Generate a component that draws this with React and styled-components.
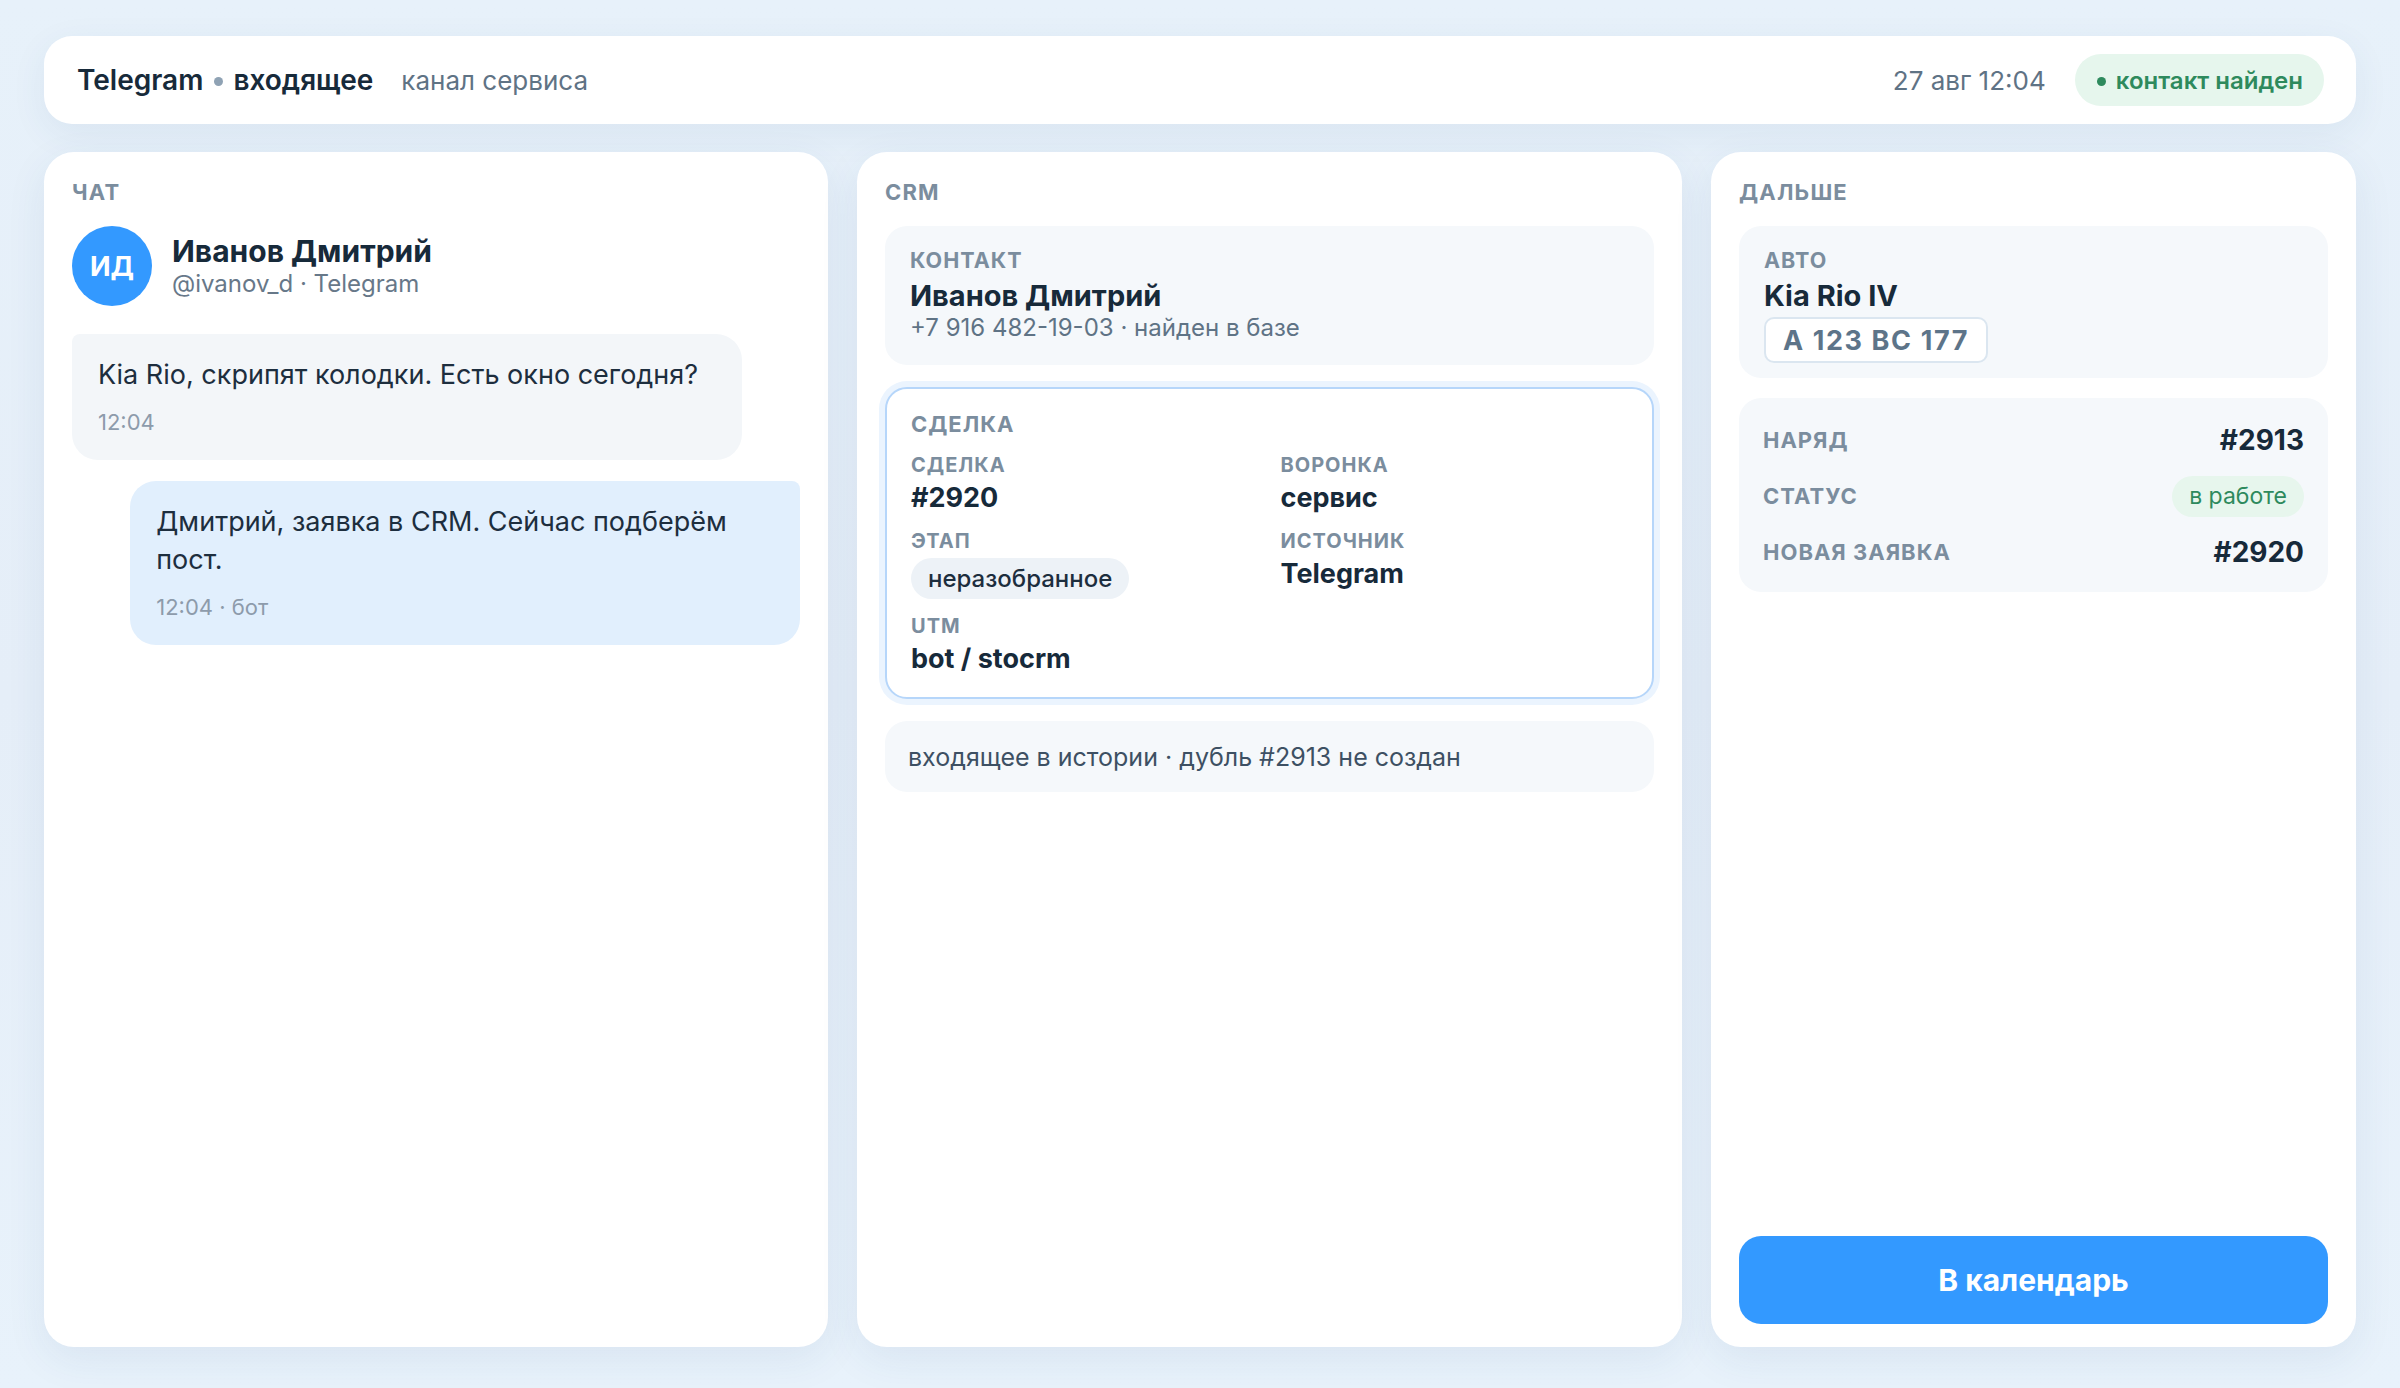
import React from "react";
import styled, { createGlobalStyle } from "styled-components";

const GlobalStyle = createGlobalStyle`
  * {
    box-sizing: border-box;
  }

  html,
  body {
    margin: 0;
    padding: 0;
    height: 100%;
  }

  body {
    font-family: Inter, "Noto Sans", "Liberation Sans", sans-serif;
    background: linear-gradient(180deg, #e7f1fa 0%, #e5eef8 50%, #e8f2fb 100%);
    color: #172a3a;
  }

  #root {
    height: 100%;
  }
`;

const Page = styled.div`
  height: 100vh;
  padding: 36px 44px 41px;
  display: flex;
  flex-direction: column;
  gap: 28px;
`;

const TopBar = styled.header`
  height: 88px;
  flex-shrink: 0;
  display: flex;
  align-items: center;
  padding: 0 32px 0 33px;
  background: #fff;
  border-radius: 28px;
  box-shadow: 0 10px 36px rgba(40, 80, 130, 0.07);
`;

const Title = styled.div`
  display: flex;
  align-items: center;
  font-size: 28px;
  font-weight: 600;
  color: #172a3a;
`;

const TitleDot = styled.span`
  width: 9px;
  height: 9px;
  border-radius: 50%;
  background: #8fa2b4;
  margin: 2px 10px 0 11px;
`;

const Subtitle = styled.div`
  margin-left: 28px;
  font-size: 26px;
  color: #5f7385;
`;

const Spacer = styled.div`
  flex: 1;
`;

const DateText = styled.div`
  font-size: 26px;
  color: #5f7385;
  margin-right: 29px;
`;

const StatusPill = styled.div`
  height: 52px;
  display: flex;
  align-items: center;
  padding: 0 21px 0 22px;
  border-radius: 26px;
  background: #e6f6ed;
  color: #2e8a5d;
  font-size: 24px;
  font-weight: 600;
`;

const PillDot = styled.span`
  width: 9px;
  height: 9px;
  border-radius: 50%;
  background: currentColor;
  margin: 2px 10px 0 0;
`;

const Columns = styled.main`
  flex: 1;
  min-height: 0;
  display: grid;
  grid-template-columns: 784fr 825fr 645fr;
  gap: 29px;
`;

const Panel = styled.section`
  background: #fff;
  border-radius: 30px;
  padding: 28px 28px 23px;
  display: flex;
  flex-direction: column;
  box-shadow: 0 12px 40px rgba(40, 80, 130, 0.08);
`;

const PanelLabel = styled.div`
  font-size: 22px;
  line-height: 24px;
  font-weight: 700;
  letter-spacing: 1.2px;
  text-transform: uppercase;
  color: #7b8d9e;
  margin-bottom: 22px;
`;

/* chat */

const ChatHead = styled.div`
  display: flex;
  align-items: center;
  gap: 20px;
  margin-bottom: 28px;
`;

const Avatar = styled.div`
  width: 80px;
  height: 80px;
  border-radius: 50%;
  background: #3399ff;
  color: #fff;
  font-size: 27px;
  font-weight: 700;
  display: flex;
  align-items: center;
  justify-content: center;
`;

const ChatName = styled.div`
  font-size: 30px;
  line-height: 36px;
  font-weight: 700;
  color: #172a3a;
`;

const ChatHandle = styled.div`
  font-size: 24px;
  line-height: 30px;
  color: #677889;
`;

const Messages = styled.div`
  display: flex;
  flex-direction: column;
  gap: 21px;
`;

const Bubble = styled.div`
  width: 92%;
  align-self: ${(p) => (p.$out ? "flex-end" : "flex-start")};
  background: ${(p) => (p.$out ? "#e1effd" : "#f3f6f9")};
  border-radius: ${(p) => (p.$out ? "26px 8px 26px 26px" : "8px 26px 26px 26px")};
  padding: 22px 26px 24px;
`;

const BubbleText = styled.div`
  font-size: 27px;
  line-height: 38px;
  color: #1d2e3e;
`;

const BubbleTime = styled.div`
  margin-top: 14px;
  font-size: 22px;
  line-height: 28px;
  color: #8d9bab;
`;

/* cards */

const Card = styled.div`
  background: #f5f8fb;
  border-radius: 22px;
  padding: ${(p) => p.$pad || "22px 25px 22px"};
`;

const CardLabel = styled.div`
  font-size: ${(p) => p.$size || 21.5}px;
  line-height: 24px;
  font-weight: 700;
  letter-spacing: 1px;
  text-transform: uppercase;
  color: #7b8d9e;
`;

const CardTitle = styled.div`
  margin-top: 7px;
  font-size: 29px;
  line-height: 34px;
  font-weight: 700;
  color: #172a3a;
`;

const CardMeta = styled.div`
  font-size: 24px;
  line-height: 30px;
  color: #5f7385;
`;

const Stack = styled.div`
  display: flex;
  flex-direction: column;
  gap: ${(p) => p.$gap || 22}px;
`;

const DealCard = styled.div`
  background: #fff;
  border: 2px solid #b6d6fa;
  border-radius: 22px;
  padding: 22px 24px 22px;
  box-shadow: 0 0 0 6px #ebf4fe;
`;

const DealHeader = styled.div`
  font-size: 22px;
  line-height: 26px;
  font-weight: 700;
  letter-spacing: 1px;
  text-transform: uppercase;
  color: #7b8d9e;
  margin-bottom: 16px;
`;

const FieldGrid = styled.div`
  display: grid;
  grid-template-columns: 1fr 1fr;
  column-gap: 22px;
  row-gap: 15px;
`;

const Field = styled.div`
  display: flex;
  flex-direction: column;
  align-items: flex-start;
  gap: 5px;
`;

const FieldValue = styled.div`
  font-size: 27px;
  line-height: 32px;
  font-weight: 700;
  color: #172a3a;
`;

const StagePill = styled.div`
  height: 41px;
  display: flex;
  align-items: center;
  padding: 0 17px;
  border-radius: 21px;
  background: #edf2f7;
  font-size: 24px;
  font-weight: 500;
  color: #1d2e3e;
`;

const NoteCard = styled(Card)`
  font-size: 25px;
  line-height: 30px;
  color: #3d5063;
`;

const Plate = styled.div`
  display: inline-flex;
  align-items: center;
  height: 46px;
  margin-top: 4px;
  padding: 0 17px;
  background: #fff;
  border: 2px solid #dbe6f0;
  border-radius: 10px;
  font-size: 27px;
  font-weight: 700;
  letter-spacing: 1.6px;
  color: #5d7489;
`;

const Rows = styled.div`
  display: flex;
  flex-direction: column;
  gap: 14px;
`;

const Row = styled.div`
  height: 42px;
  display: flex;
  align-items: center;
  justify-content: space-between;
`;

const RowValue = styled.div`
  font-size: 28px;
  font-weight: 700;
  color: #172a3a;
`;

const WorkPill = styled.div`
  height: 41px;
  display: flex;
  align-items: center;
  padding: 0 17px;
  border-radius: 21px;
  background: #e7f6ed;
  color: #2e8a5d;
  font-size: 23px;
`;

const CalendarButton = styled.button`
  margin-top: auto;
  height: 88px;
  width: 100%;
  border: none;
  border-radius: 22px;
  background: #3399ff;
  color: #fff;
  font-family: inherit;
  font-size: 30px;
  font-weight: 700;
  cursor: pointer;
`;

function ChatPanel() {
  return (
    <Panel>
      <PanelLabel>Чат</PanelLabel>
      <ChatHead>
        <Avatar>ИД</Avatar>
        <div>
          <ChatName>Иванов Дмитрий</ChatName>
          <ChatHandle>@ivanov_d · Telegram</ChatHandle>
        </div>
      </ChatHead>
      <Messages>
        <Bubble>
          <BubbleText>Kia Rio, скрипят колодки. Есть окно сегодня?</BubbleText>
          <BubbleTime>12:04</BubbleTime>
        </Bubble>
        <Bubble $out>
          <BubbleText>Дмитрий, заявка в CRM. Сейчас подберём пост.</BubbleText>
          <BubbleTime>12:04 · бот</BubbleTime>
        </Bubble>
      </Messages>
    </Panel>
  );
}

function CrmPanel() {
  return (
    <Panel>
      <PanelLabel>CRM</PanelLabel>
      <Stack>
        <Card>
          <CardLabel>Контакт</CardLabel>
          <CardTitle>Иванов Дмитрий</CardTitle>
          <CardMeta>+7 916 482-19-03 · найден в базе</CardMeta>
        </Card>
        <DealCard>
          <DealHeader>Сделка</DealHeader>
          <FieldGrid>
            <Field>
              <CardLabel $size={20}>Сделка</CardLabel>
              <FieldValue>#2920</FieldValue>
            </Field>
            <Field>
              <CardLabel $size={20}>Воронка</CardLabel>
              <FieldValue>сервис</FieldValue>
            </Field>
            <Field>
              <CardLabel $size={20}>Этап</CardLabel>
              <StagePill>неразобранное</StagePill>
            </Field>
            <Field>
              <CardLabel $size={20}>Источник</CardLabel>
              <FieldValue>Telegram</FieldValue>
            </Field>
            <Field>
              <CardLabel $size={20}>UTM</CardLabel>
              <FieldValue>bot / stocrm</FieldValue>
            </Field>
          </FieldGrid>
        </DealCard>
        <NoteCard $pad="21px 23px 20px">
          входящее в истории · дубль #2913 не создан
        </NoteCard>
      </Stack>
    </Panel>
  );
}

function NextPanel() {
  return (
    <Panel>
      <PanelLabel>Дальше</PanelLabel>
      <Stack $gap={20}>
        <Card $pad="22px 25px 15px">
          <CardLabel>Авто</CardLabel>
          <CardTitle>Kia Rio IV</CardTitle>
          <Plate>А 123 ВС 177</Plate>
        </Card>
        <Card $pad="21px 24px 19px">
          <Rows>
            <Row>
              <CardLabel $size={22}>Наряд</CardLabel>
              <RowValue>#2913</RowValue>
            </Row>
            <Row>
              <CardLabel $size={22}>Статус</CardLabel>
              <WorkPill>в работе</WorkPill>
            </Row>
            <Row>
              <CardLabel $size={22}>Новая заявка</CardLabel>
              <RowValue>#2920</RowValue>
            </Row>
          </Rows>
        </Card>
      </Stack>
      <CalendarButton>В календарь</CalendarButton>
    </Panel>
  );
}

export default function App() {
  return (
    <>
      <GlobalStyle />
      <Page>
        <TopBar>
          <Title>
            Telegram
            <TitleDot />
            входящее
          </Title>
          <Subtitle>канал сервиса</Subtitle>
          <Spacer />
          <DateText>27 авг 12:04</DateText>
          <StatusPill>
            <PillDot />
            контакт найден
          </StatusPill>
        </TopBar>
        <Columns>
          <ChatPanel />
          <CrmPanel />
          <NextPanel />
        </Columns>
      </Page>
    </>
  );
}
